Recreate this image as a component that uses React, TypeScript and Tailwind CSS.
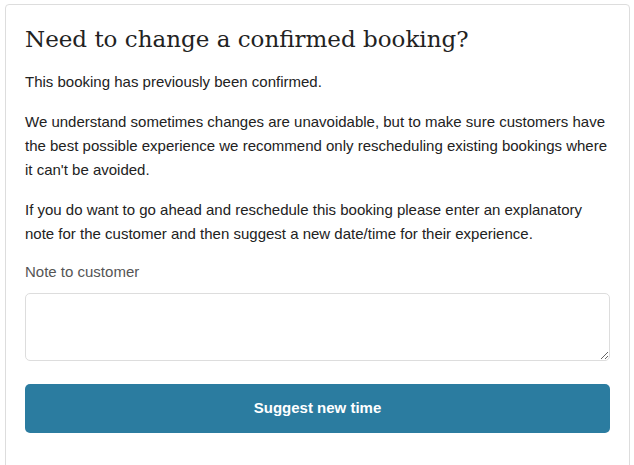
import React from "react";

export default function App() {
  return (
    <div className="min-h-screen bg-white pt-[4px] pl-[5px] pr-[4px]">
      <div className="border border-[#dddddd] rounded-[4px] px-[19px] pt-[19px] pb-[30px] min-h-[480px] font-['Liberation_Sans',Arial,sans-serif] text-[#222222]">
        <h2 className="font-['DejaVu_Serif',Georgia,serif] text-[23px] leading-[30px] text-[#222222] mb-[16px]">
          Need to change a confirmed booking?
        </h2>
        <p className="text-[15px] leading-[24px] mb-[16px]">This booking has previously been confirmed.</p>
        <p className="text-[15px] leading-[24px] mb-[16px]">
          We understand sometimes changes are unavoidable, but to make sure customers have the best possible experience we recommend only rescheduling existing bookings where it can't be avoided.
        </p>
        <p className="text-[15px] leading-[24px] mb-[14px]">
          If you do want to go ahead and reschedule this booking please enter an explanatory note for the customer and then suggest a new date/time for their experience.
        </p>
        <label className="block text-[15px] leading-[24px] text-[#555555] mb-[9px]">Note to customer</label>
        <textarea className="block w-full h-[68px] border border-[#dddddd] rounded-[5px] mb-[23px]" />
        <button className="block w-full h-[49px] rounded-[5px] bg-[#2b7ca0] text-white font-bold text-[15px]">
          Suggest new time
        </button>
      </div>
    </div>
  );
}
